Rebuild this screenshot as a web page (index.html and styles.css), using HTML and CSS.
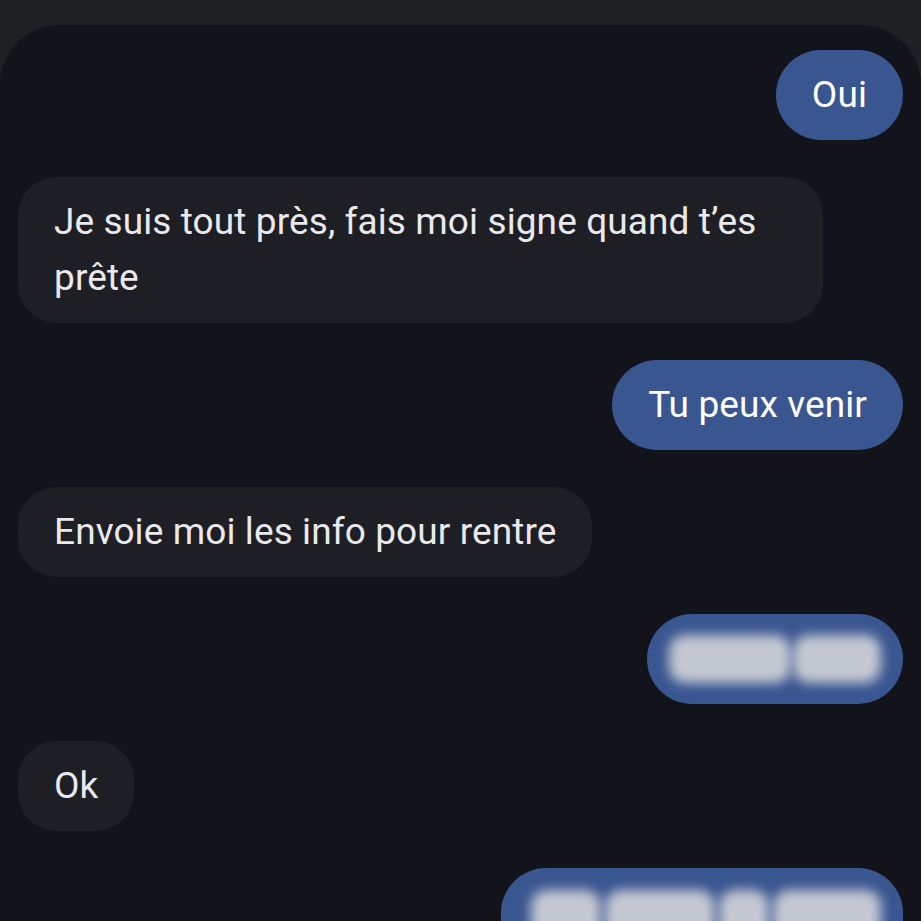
FILE: index.html
```html
<!DOCTYPE html>
<html lang="fr">
<head>
    <meta charset="UTF-8">
    <meta name="viewport" content="width=device-width, initial-scale=1.0">
    <title>Messages</title>
    <link rel="stylesheet" href="styles.css">
</head>
<body>
    <div class="chat">
        <div class="bubble sent">Oui</div>
        <div class="bubble received">Je suis tout près, fais moi signe quand t’es prête</div>
        <div class="bubble sent">Tu peux venir</div>
        <div class="bubble received">Envoie moi les info pour rentre</div>

        <!-- hidden content, blurred in the original -->
        <div class="bubble sent hidden">
            <span class="blob blob-a"></span><span class="blob blob-b"></span>
        </div>

        <div class="bubble received">Ok</div>

        <div class="bubble sent hidden last">
            <span class="blob blob-c"></span><span class="blob blob-d"></span><span class="blob blob-e"></span><span class="blob blob-f"></span>
        </div>
    </div>
</body>
</html>
```

FILE: styles.css
```css
body {
    margin: 0;
    height: 921px;
    overflow: hidden;
    background-color: #1f2024;
    font-family: Roboto, "Noto Sans", Arial, sans-serif;
}
.chat {
    margin-top: 25px;
    height: 896px;
    overflow: hidden;
    box-sizing: border-box;
    background-color: #12131b;
    border-radius: 60px 60px 0 0;
    padding: 25px 18px 0 18px;
    display: flex;
    flex-direction: column;
    gap: 37px;
}
.bubble {
    box-sizing: border-box;
    flex-shrink: 0;
    max-width: 805px;
    padding: 17px 36px;
    font-size: 37px;
    letter-spacing: 0.1px;
    line-height: 56px;
    border-radius: 45px;
}
.received {
    align-self: flex-start;
    background-color: #1e1f24;
    color: #e9e9ee;
    border-radius: 38px;
}
.sent {
    align-self: flex-end;
    background-color: #3a5690;
    color: #ffffff;
}
/* Blurred placeholders */
.hidden {
    display: flex;
    align-items: center;
    height: 90px;
    padding: 0 22px;
}
.blob {
    display: inline-block;
    height: 48px;
    background-color: #c4c8d2;
    border-radius: 16px;
    filter: blur(6px);
}
.blob-a {
    width: 122px;
}
.blob-b {
    width: 88px;
    margin-left: 2px;
}
.last {
    height: 110px;
    align-items: flex-start;
    padding-top: 22px;
    padding-left: 30px;
}
.blob-c {
    width: 70px;
}
.blob-d {
    width: 110px;
    margin-left: 4px;
}
.blob-e {
    width: 50px;
    margin-left: 4px;
}
.blob-f {
    width: 108px;
    margin-left: 4px;
}
```
